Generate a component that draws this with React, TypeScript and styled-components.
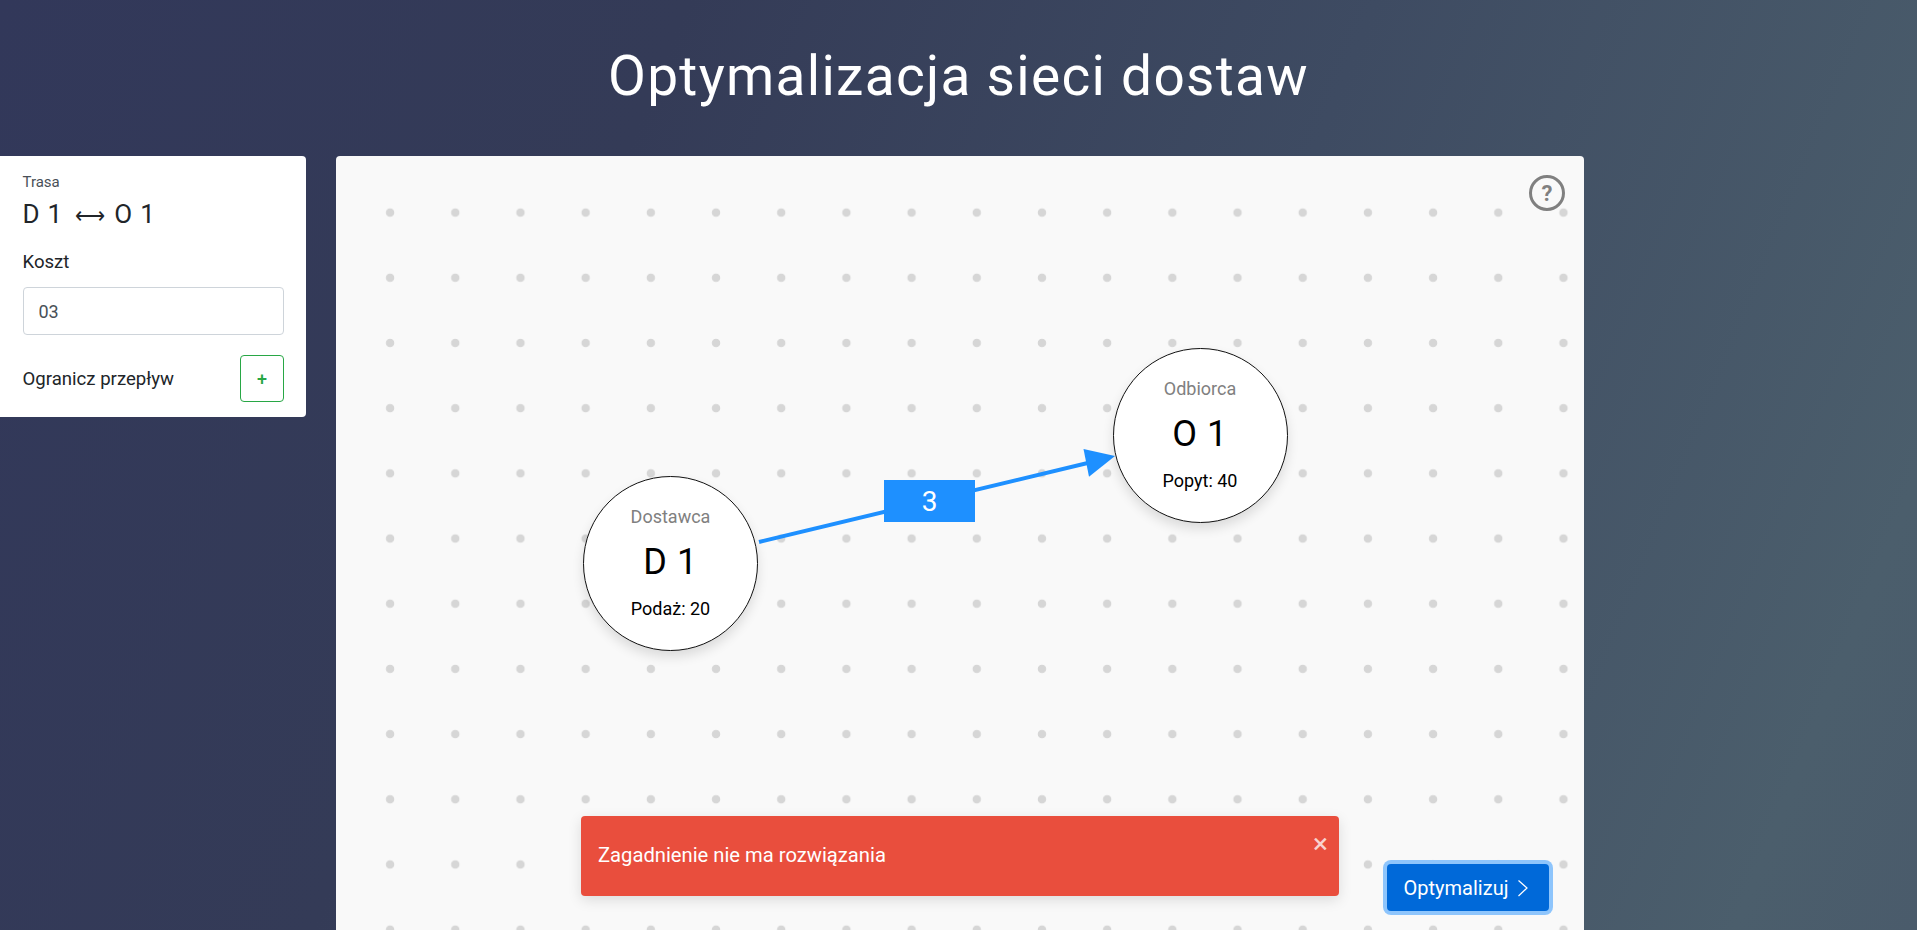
import React from "react";
import styled, { createGlobalStyle } from "styled-components";

const Global = createGlobalStyle`
  html, body { margin: 0; padding: 0; height: 100%; overflow: hidden; }
  body { font-family: Roboto, "Liberation Sans", sans-serif; }
  * { box-sizing: border-box; }
`;

const Page = styled.div`
  width: 1917px;
  height: 930px;
  overflow: hidden;
  background: linear-gradient(112deg, #32385a 0%, #343b57 30%, #3e4b62 60%, #4b5e6c 92%, #4a5b6b 100%);
`;

const Title = styled.h1`
  margin: 0;
  height: 156px;
  padding-top: 43px;
  text-align: center;
  font-size: 55px;
  line-height: 67px;
  font-weight: 400;
  letter-spacing: 1.3px;
  color: #fff;
`;

const Main = styled.div`
  display: flex;
  align-items: flex-start;
  gap: 30px;
`;

const Side = styled.aside`
  width: 306px;
  height: 261px;
  padding: 18px 22px 0 22.5px;
  background: #fff;
  border-radius: 0 4px 4px 0;
  color: #212529;
`;

const Caption = styled.div`
  font-size: 15px;
  line-height: 16px;
  color: #495057;
`;

const Route = styled.div`
  margin-top: 9px;
  font-size: 26px;
  line-height: 31px;
  letter-spacing: 0.8px;
`;

const RouteArrow = styled.span`
  font-size: 21px;
  line-height: 0;
  margin: 0 1px 0 5px;
`;

const FieldLabel = styled.div`
  margin-top: 22px;
  font-size: 18.6px;
  line-height: 21px;
`;

const Input = styled.input`
  display: block;
  width: 100%;
  height: 48px;
  margin-top: 14px;
  padding: 0 15px;
  border: 1px solid #ced4da;
  border-radius: 4px;
  font: 400 18px Roboto, sans-serif;
  color: #495057;
  outline: none;
`;

const LimitRow = styled.div`
  display: flex;
  align-items: center;
  justify-content: space-between;
  margin-top: 20px;
  font-size: 18.6px;
`;

const PlusButton = styled.button`
  width: 44px;
  height: 47px;
  padding: 0;
  background: #fff;
  border: 1px solid #28a745;
  border-radius: 4px;
  color: #28a745;
  font: 500 18px Roboto, sans-serif;
`;

const Canvas = styled.section`
  position: relative;
  width: 1248px;
  height: 830px;
  border-radius: 4px 4px 0 0;
  background-color: #f9f9f9;
  background-image: radial-gradient(circle at center, #d6d6d6 0, #d6d6d6 3.8px, transparent 4.6px);
  background-size: 65.2px 65.2px;
  background-position: 21.5px 24px;
`;

const Help = styled.div`
  position: absolute;
  top: 19px;
  right: 19px;
  width: 36px;
  height: 36px;
  display: flex;
  align-items: center;
  justify-content: center;
  border: 3px solid #808080;
  border-radius: 50%;
  color: #808080;
  font-size: 22px;
  font-weight: 700;
`;

const EdgeLayer = styled.svg`
  position: absolute;
  inset: 0;
  width: 100%;
  height: 100%;
`;

const EdgeLabel = styled.div`
  position: absolute;
  left: 548px;
  top: 324px;
  width: 91px;
  height: 42px;
  display: flex;
  align-items: center;
  justify-content: center;
  background: #1e90ff;
  color: #fff;
  font-size: 28px;
`;

const Node = styled.div<{ $x: number; $y: number }>`
  position: absolute;
  left: ${(p) => p.$x}px;
  top: ${(p) => p.$y}px;
  width: 175px;
  height: 175px;
  display: flex;
  flex-direction: column;
  align-items: center;
  padding-top: 29px;
  background: #fff;
  border: 1px solid #111;
  border-radius: 50%;
  box-shadow: 0 6px 12px rgba(0, 0, 0, 0.12);
  color: #000;
`;

const NodeRole = styled.div`
  font-size: 18px;
  line-height: 21px;
  color: #808080;
`;

const NodeName = styled.div`
  margin-top: 14px;
  font-size: 36px;
  line-height: 42px;
  letter-spacing: 0.5px;
`;

const NodeValue = styled.div`
  margin-top: 15px;
  font-size: 18px;
  line-height: 21px;
`;

const Toast = styled.div`
  position: absolute;
  left: 245px;
  top: 660px;
  width: 758px;
  height: 80px;
  padding: 27px 17px;
  background: #e94e3d;
  border-radius: 4px;
  box-shadow: 0 4px 14px rgba(0, 0, 0, 0.12);
  color: #fff;
  font-size: 20.2px;
  line-height: 24px;
`;

const Close = styled.span`
  position: absolute;
  top: 14px;
  right: 11px;
  font-size: 28px;
  line-height: 28px;
  color: rgba(255, 255, 255, 0.75);
`;

const Optimize = styled.button`
  position: absolute;
  left: 1051px;
  top: 708px;
  width: 162px;
  height: 47px;
  display: flex;
  align-items: center;
  justify-content: center;
  gap: 8px;
  padding: 0 2px 0 0;
  background: #0069d9;
  border: none;
  border-radius: 4px;
  box-shadow: 0 0 0 4px #8ec5fc;
  color: #fff;
  font: 400 20px Roboto, sans-serif;
`;

export default function App() {
  return (
    <Page>
      <Global />
      <Title>Optymalizacja sieci dostaw</Title>
      <Main>
        <Side>
          <Caption>Trasa</Caption>
          <Route>D 1 <RouteArrow>⟷</RouteArrow> O 1</Route>
          <FieldLabel>Koszt</FieldLabel>
          <Input defaultValue="03" />
          <LimitRow>
            <span>Ogranicz przepływ</span>
            <PlusButton>+</PlusButton>
          </LimitRow>
        </Side>
        <Canvas>
          <Help>?</Help>
          <EdgeLayer viewBox="0 0 1248 830">
            <line x1="423" y1="386" x2="760" y2="305" stroke="#1e90ff" strokeWidth="4" />
            <polygon points="779,300 747.5,293 753,320.7" fill="#1e90ff" />
          </EdgeLayer>
          <EdgeLabel>3</EdgeLabel>
          <Node $x={247} $y={320}>
            <NodeRole>Dostawca</NodeRole>
            <NodeName>D 1</NodeName>
            <NodeValue>Podaż: 20</NodeValue>
          </Node>
          <Node $x={776.5} $y={192}>
            <NodeRole>Odbiorca</NodeRole>
            <NodeName>O 1</NodeName>
            <NodeValue>Popyt: 40</NodeValue>
          </Node>
          <Toast>
            Zagadnienie nie ma rozwiązania
            <Close>×</Close>
          </Toast>
          <Optimize>
            Optymalizuj
            <svg width="14" height="20" viewBox="0 0 14 20" fill="none" stroke="#fff" strokeWidth="1.2">
              <path d="M2.5 2.5 11 10 2.5 18" />
            </svg>
          </Optimize>
        </Canvas>
      </Main>
    </Page>
  );
}
